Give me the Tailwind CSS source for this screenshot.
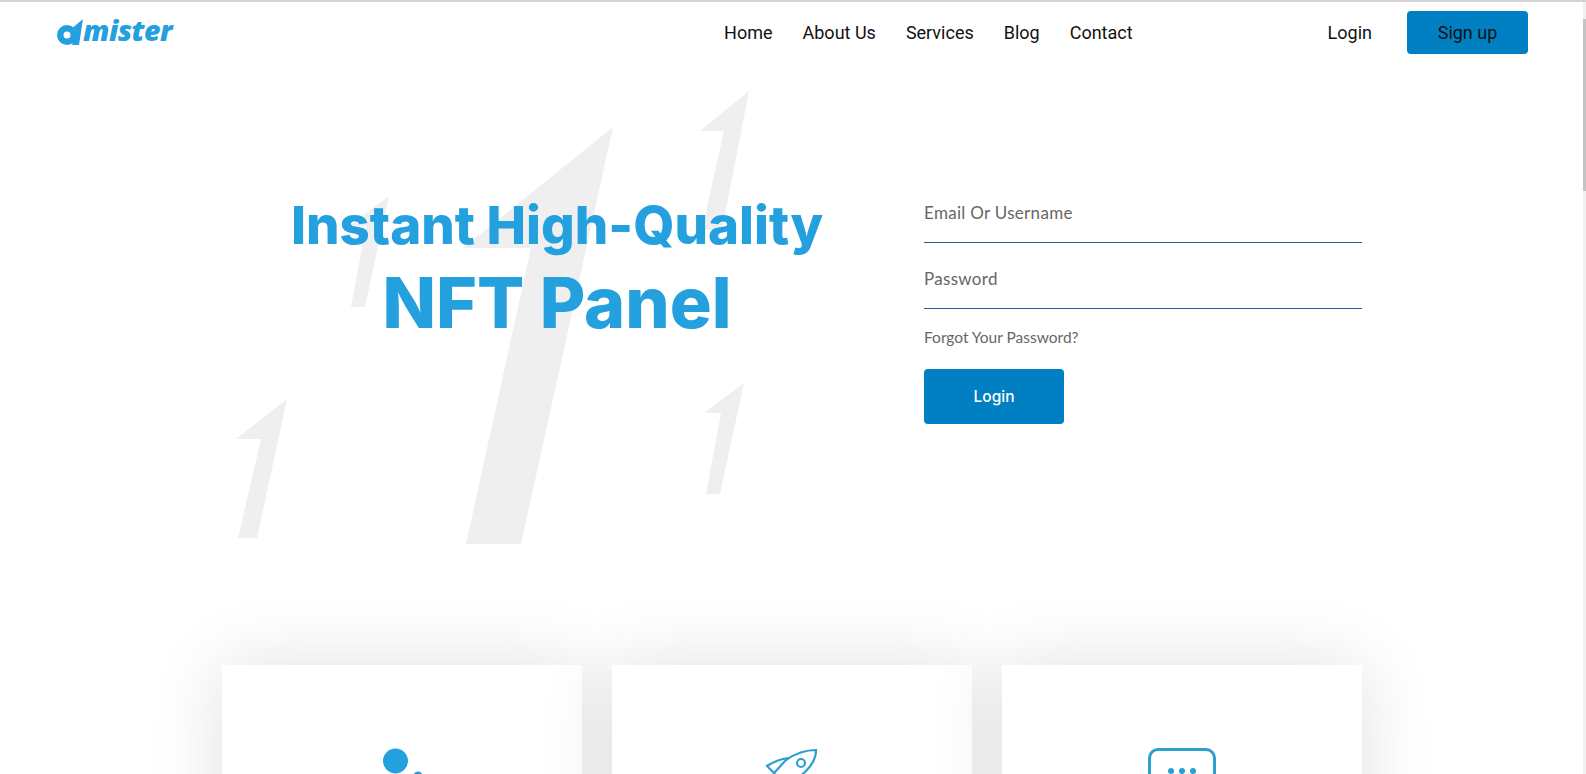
<!DOCTYPE html>
<html lang="en">
  <head>
    <meta charset="UTF-8" />
    <meta name="viewport" content="width=device-width, initial-scale=1.0" />
    <title>Dmister - NFT Panel</title>
    <script src="https://cdn.jsdelivr.net/npm/@tailwindcss/browser@4"></script>
  </head>
  <body class="bg-white">
    <div class="relative h-[774px] w-full overflow-hidden border-t-2 border-[#d2d2d2] bg-white">
      <!-- watermark arrows behind the hero -->
      <svg class="absolute left-0 top-[-2px] z-0" width="1586" height="774" viewBox="0 0 1586 774" fill="#efefef">
        <polygon points="613,127 463,248 531,248 466,544 521,544" />
        <polygon points="749,91 700,131 724,131 702,230 722,230" />
        <polygon points="389,196 349,226 366,226 351,307 365,307" />
        <polygon points="287,399 236,439 261,439 238,538 257,538" />
        <polygon points="744,383 704,413 721,413 706,494 720,494" />
      </svg>

      <!-- header -->
      <header class="relative z-10 flex h-[60px] items-center pl-[57px] pr-[58px] font-['Roboto',sans-serif] text-[18px] text-[#111]">
        <a href="#" class="mt-[-4px] flex items-end">
          <svg width="28" height="28" viewBox="0 0 28 28" fill="#23a0dd">
            <path fill-rule="evenodd" d="M10 7a10 10 0 1 0 0 20a10 10 0 1 0 0-20zM10 13.5a3.5 3.5 0 1 1 0 7a3.5 3.5 0 1 1 0-7z" />
            <polygon points="26,1 13,12 19,12 15,27 22,27" />
          </svg>
          <span class="ml-[-2px] mb-[-1px] font-['Open_Sans',sans-serif] text-[28.5px] leading-[33px] font-extrabold italic tracking-[-0.5px] text-[#23a0dd]">mister</span>
        </a>
        <nav class="ml-auto flex items-center gap-[30px]">
          <a href="#">Home</a>
          <a href="#">About Us</a>
          <a href="#">Services</a>
          <a href="#">Blog</a>
          <a href="#">Contact</a>
        </nav>
        <a href="#" class="ml-[195px]">Login</a>
        <a href="#" class="ml-[35px] flex h-[43px] w-[121px] items-center justify-center rounded bg-[#0080c2]">Sign up</a>
      </header>

      <!-- hero -->
      <section class="relative z-10 flex h-[603px] pl-[222px]">
        <div class="w-[670px] pt-[133px] text-center font-['Inter',sans-serif] font-extrabold text-[#23a0dd]">
          <h2 class="text-[52.8px] leading-[60px]">Instant High-Quality</h2>
          <h1 class="mt-[10px] text-[70px] leading-[76px]">NFT Panel</h1>
        </div>
        <form class="ml-[32px] w-[438px] pt-[130px] font-['Lato',sans-serif] text-[#666]">
          <input type="text" placeholder="Email Or Username" class="mb-[15px] block h-[51px] w-full border-b border-[#2d5a96] pb-[10px] text-[17px] tracking-[0.3px] outline-none placeholder:text-[#666]" />
          <input type="password" placeholder="Password" class="block h-[51px] w-full border-b border-[#2d5a96] pb-[10px] text-[17px] tracking-[0.3px] outline-none placeholder:text-[#666]" />
          <a href="#" class="mt-[18px] block text-[15.5px] leading-[20px]">Forgot Your Password?</a>
          <button type="button" class="mt-[22px] h-[55px] w-[140px] rounded bg-[#0080c2] font-['Inter',sans-serif] text-[15.5px] font-medium text-white">Login</button>
        </form>
      </section>

      <!-- feature cards, cut by the fold -->
      <section class="relative z-10 flex gap-[30px] pl-[222px]">
        <div class="flex h-[300px] w-[360px] justify-center bg-white pt-[83px] shadow-[0_0_70px_rgba(0,0,0,0.12)]">
          <svg width="50" height="50" viewBox="0 0 50 50" fill="#23a0dd">
            <circle cx="18.5" cy="13" r="12.5" />
            <circle cx="41" cy="28" r="4.5" />
          </svg>
        </div>
        <div class="flex h-[300px] w-[360px] justify-center bg-white pt-[82px] shadow-[0_0_70px_rgba(0,0,0,0.12)]">
          <svg class="ml-[3px]" width="60" height="60" viewBox="0 0 60 60" fill="none" stroke="#2a9fd0" stroke-width="2.2">
            <path d="M52 3C42 3 32 6 22 13L10 26L22 42L42 24C48 18 52 10 52 3Z" />
            <path d="M24 11C16 12 9 15 3 19L10 26" />
            <circle cx="37" cy="16" r="4" />
          </svg>
        </div>
        <div class="flex h-[300px] w-[360px] justify-center bg-white pt-[83px] shadow-[0_0_70px_rgba(0,0,0,0.12)]">
          <div class="flex h-[46px] w-[68px] items-center justify-center gap-[5px] rounded-[10px] border-[3px] border-[#2a9fd0]">
            <span class="size-[6px] rounded-full bg-[#2a9fd0]"></span>
            <span class="size-[6px] rounded-full bg-[#2a9fd0]"></span>
            <span class="size-[6px] rounded-full bg-[#2a9fd0]"></span>
          </div>
        </div>
      </section>

      <!-- browser scrollbar -->
      <div class="absolute right-0 top-[-2px] z-20 h-[774px] w-[3px] bg-[#f0f0f0]">
        <div class="mt-[19px] h-[172px] w-full bg-[#c4c4c4]"></div>
      </div>
    </div>
  </body>
</html>
